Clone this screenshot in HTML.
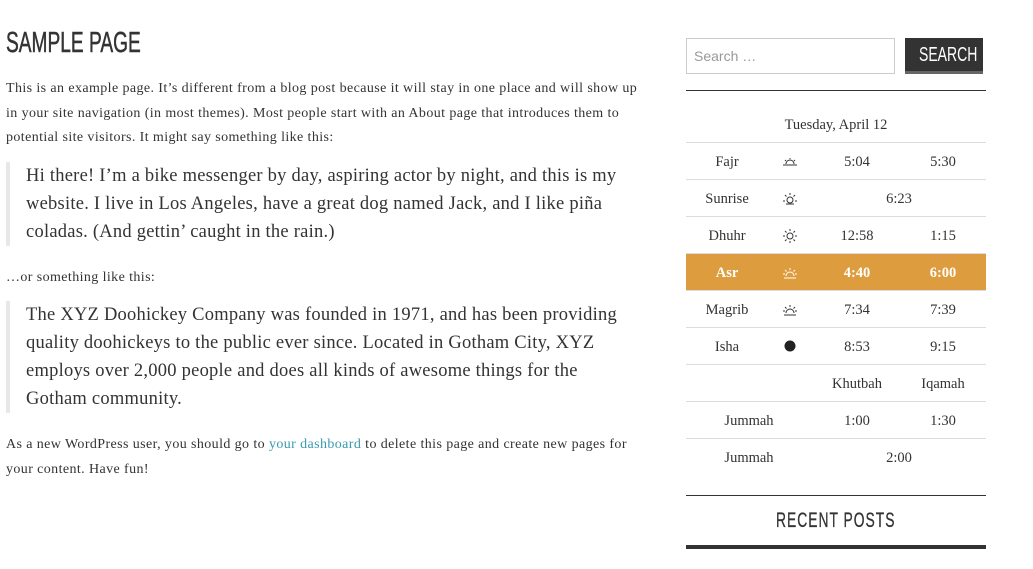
<!DOCTYPE html>
<html><head><meta charset="utf-8"><style>
*{margin:0;padding:0;box-sizing:border-box}
body{width:1033px;height:569px;overflow:hidden;background:#fff;font-family:"Liberation Serif",Georgia,serif;color:#333;position:relative}
.h{position:absolute;font-family:"Liberation Sans",sans-serif;transform-origin:left top;white-space:nowrap}
#title{left:6px;top:27px;font-size:29px;color:#333;transform:scaleX(.66);-webkit-text-stroke:.5px #333}
.p{position:absolute;left:6px;font-size:14px;letter-spacing:.4px;line-height:24.5px;color:#333;white-space:nowrap}
.bq{position:absolute;left:6px;border-left:4px solid #e8e8e8;padding-left:16px;font-size:18.5px;letter-spacing:.24px;line-height:28px;color:#333;white-space:nowrap}
a{color:#3a9ab0;text-decoration:none}
#search{position:absolute;left:686px;top:38px;width:209px;height:36px;border:1px solid #ccc;font-family:"Liberation Sans",sans-serif;font-size:14px;color:#999;padding:9px 7px}
#btn{position:absolute;left:905px;top:38px;width:78px;height:36px;background:#333;border-bottom:3px solid #666}
#btn span{position:absolute;left:14px;top:6px;color:#fff;font-family:"Liberation Sans",sans-serif;font-size:20px;transform:scaleX(.7);transform-origin:left top}
.line{position:absolute;left:686px;width:300px}
.r{position:absolute;left:686px;width:300px;height:37px;border-bottom:1px solid #ddd;font-size:14.5px;color:#333}
.r div{position:absolute;top:11px;text-align:center}
.c1{left:0;width:82px}.c2{left:90px;width:28px}.c3{left:130px;width:82px}.c4{left:214px;width:86px}
.c2 svg{display:block;margin:1px auto 0}
.asr{background:#dd9c3e;color:#fff;font-weight:bold}
</style></head><body>
<div class="h" id="title">SAMPLE PAGE</div>
<div class="p" style="top:77px">This is an example page. It’s different from a blog post because it will stay in one place and will show up<br>in your site navigation (in most themes). Most people start with an About page that introduces them to<br>potential site visitors. It might say something like this:</div>
<div class="bq" style="top:162px">Hi there! I’m a bike messenger by day, aspiring actor by night, and this is my<br>website. I live in Los Angeles, have a great dog named Jack, and I like piña<br>coladas. (And gettin’ caught in the rain.)</div>
<div class="p" style="top:266px">…or something like this:</div>
<div class="bq" style="top:301px">The XYZ Doohickey Company was founded in 1971, and has been providing<br>quality doohickeys to the public ever since. Located in Gotham City, XYZ<br>employs over 2,000 people and does all kinds of awesome things for the<br>Gotham community.</div>
<div class="p" style="top:433px">As a new WordPress user, you should go to <a>your dashboard</a> to delete this page and create new pages for<br>your content. Have fun!</div>

<div id="search">Search …</div>
<div id="btn"><span>SEARCH</span></div>
<div class="line" style="top:90px;border-top:1px solid #333"></div>
<div class="r" style="top:106px;height:37px"><div style="left:0;width:300px">Tuesday, April 12</div></div>
<div class="r" style="top:143px"><div class="c1">Fajr</div><div class="c2"><svg width="16" height="12" viewBox="0 0 16 12" stroke="#333" fill="none"><path d="M1 10h14M4 9a4 4 0 0 1 8 0M8 3v1M3 5l1 1M13 5l-1 1"/></svg></div><div class="c3">5:04</div><div class="c4">5:30</div></div>
<div class="r" style="top:180px"><div class="c1">Sunrise</div><div class="c2"><svg width="16" height="14" viewBox="0 0 16 14" stroke="#333" fill="none"><circle cx="8" cy="8" r="3"/><path d="M8 1v2M3 3l1.5 1.5M13 3l-1.5 1.5M1 9h2M13 9h2M4 12h8"/></svg></div><div class="c3" style="left:170px;width:86px">6:23</div></div>
<div class="r" style="top:217px"><div class="c1">Dhuhr</div><div class="c2"><svg width="16" height="14" viewBox="0 0 16 14" stroke="#333" fill="none"><circle cx="8" cy="7" r="3"/><path d="M8 0v2M8 12v2M1 7h2M13 7h2M3 2l1.5 1.5M13 2l-1.5 1.5M3 12l1.5-1.5M13 12l-1.5-1.5"/></svg></div><div class="c3">12:58</div><div class="c4">1:15</div></div>
<div class="r asr" style="top:254px"><div class="c1">Asr</div><div class="c2"><svg width="16" height="14" viewBox="0 0 16 14" stroke="#fff" fill="none"><path d="M4 10a4 4 0 0 1 8 0M8 2v2M3 4l1.5 1.5M13 4l-1.5 1.5M1 8h2M13 8h2M2 12h12"/></svg></div><div class="c3">4:40</div><div class="c4">6:00</div></div>
<div class="r" style="top:291px"><div class="c1">Magrib</div><div class="c2"><svg width="16" height="14" viewBox="0 0 16 14" stroke="#333" fill="none"><path d="M4 10a4 4 0 0 1 8 0M8 2v2M3 4l1.5 1.5M13 4l-1.5 1.5M1 8h2M13 8h2M2 12h12"/></svg></div><div class="c3">7:34</div><div class="c4">7:39</div></div>
<div class="r" style="top:328px"><div class="c1">Isha</div><div class="c2"><svg width="12" height="12" viewBox="0 0 12 12"><circle cx="6" cy="6" r="5.5" fill="#222"/></svg></div><div class="c3">8:53</div><div class="c4">9:15</div></div>
<div class="r" style="top:365px"><div class="c3">Khutbah</div><div class="c4">Iqamah</div></div>
<div class="r" style="top:402px"><div class="c1" style="left:20px;width:86px">Jummah</div><div class="c3">1:00</div><div class="c4">1:30</div></div>
<div class="r" style="top:439px;border-bottom:none"><div class="c1" style="left:20px;width:86px">Jummah</div><div class="c3" style="left:170px;width:86px">2:00</div></div>
<div class="line" style="top:495px;border-top:1px solid #333"></div>
<div class="h" style="left:776px;top:509px;font-size:21px;color:#333;transform:scaleX(.66);letter-spacing:1.5px;-webkit-text-stroke:.3px #333">RECENT POSTS</div>
<div class="line" style="top:545px;border-top:4px solid #333"></div>
</body></html>
